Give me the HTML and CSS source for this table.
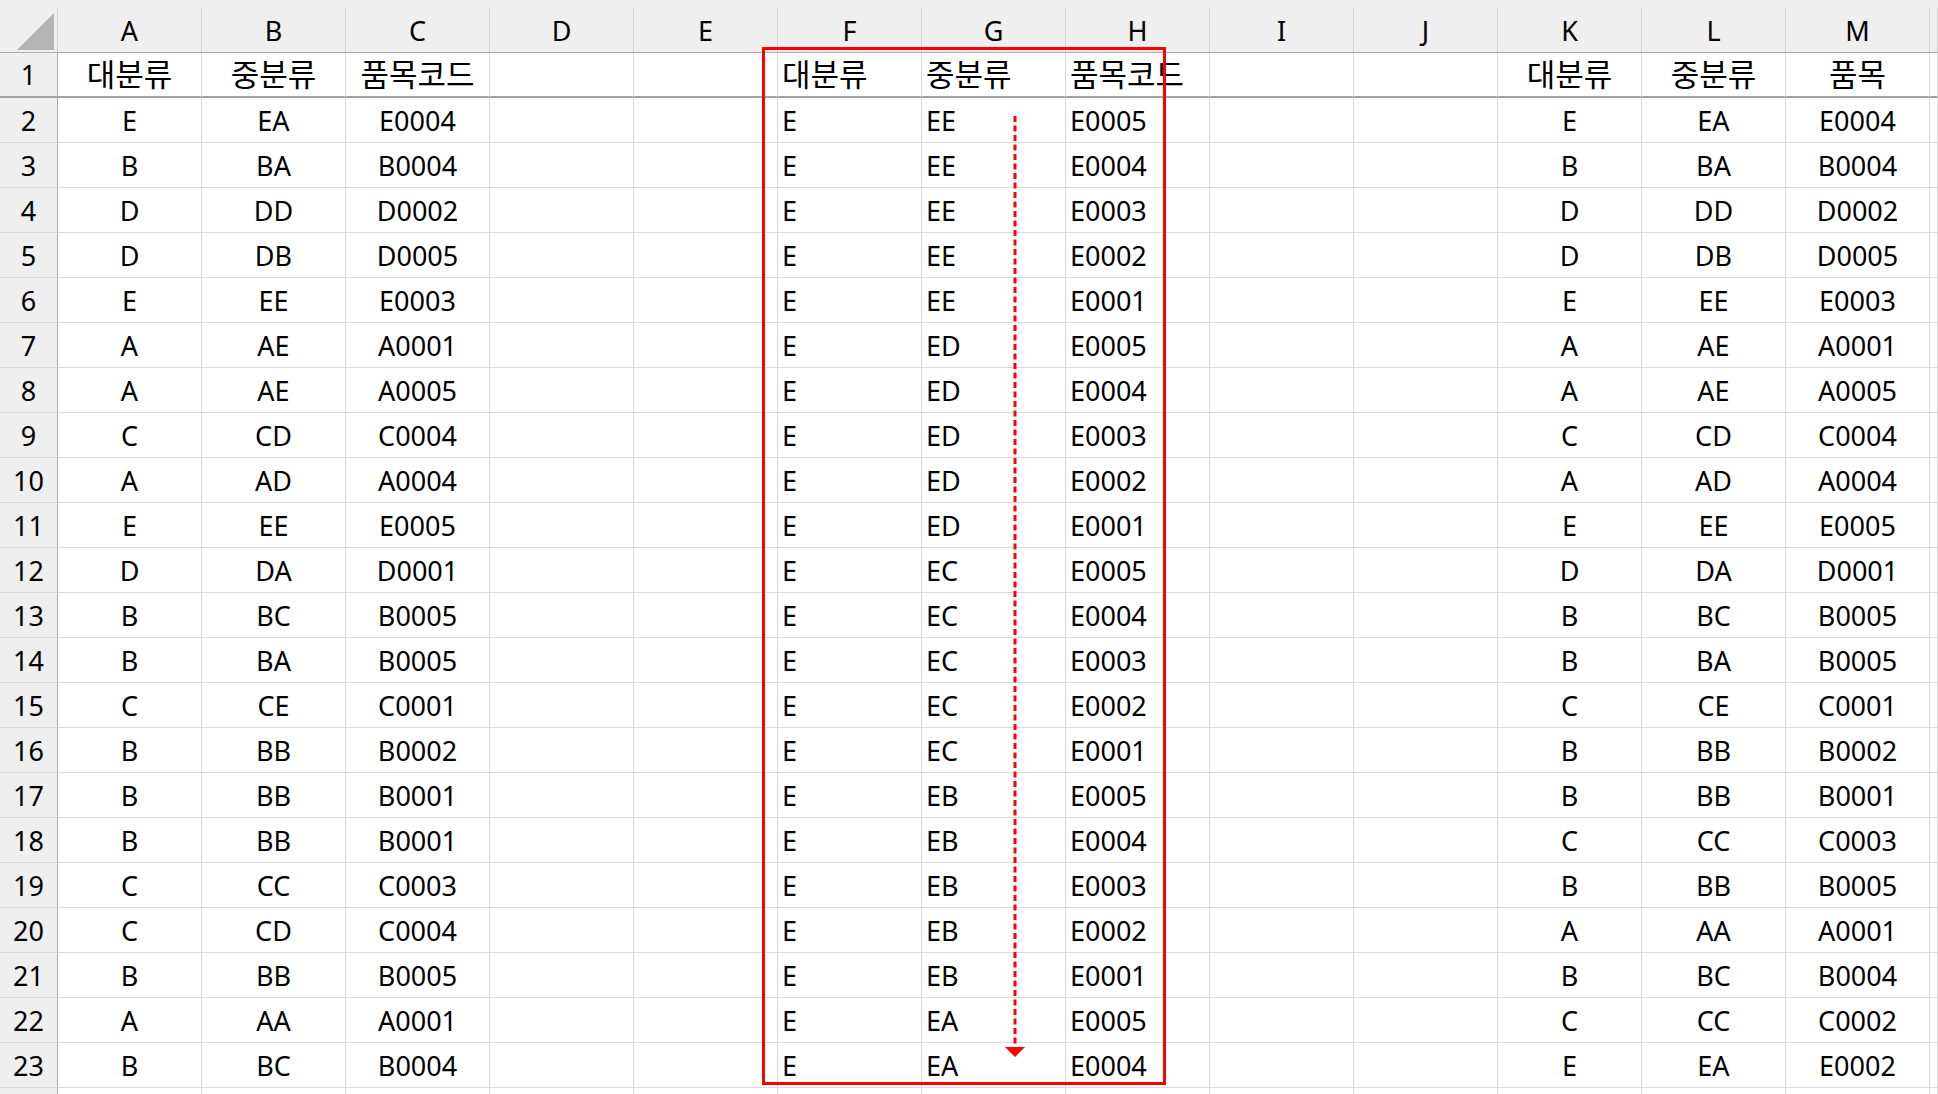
FILE: index.html
```html
<!DOCTYPE html>
<html lang="ko">
<head>
<meta charset="utf-8">
<title>Sheet</title>
<link rel="stylesheet" href="styles.css">
</head>
<body>
<div class="sheet">
  <div class="colhdr">
    <div class="corner"><div class="tri"></div></div>
    <div class="ch">A</div><div class="ch">B</div><div class="ch">C</div><div class="ch">D</div><div class="ch">E</div><div class="ch">F</div><div class="ch">G</div><div class="ch">H</div><div class="ch">I</div><div class="ch">J</div><div class="ch">K</div><div class="ch">L</div><div class="ch">M</div><div class="ch"></div>
  </div>
  <div class="grid">
    <div class="rh r1">1</div><div class="c r1"><span class="ko">대분류</span></div><div class="c r1"><span class="ko">중분류</span></div><div class="c r1"><span class="ko">품목코드</span></div><div class="r1"></div><div class="r1"></div><div class="l r1"><span class="ko">대분류</span></div><div class="l r1"><span class="ko">중분류</span></div><div class="l r1"><span class="ko">품목코드</span></div><div class="r1"></div><div class="r1"></div><div class="c r1"><span class="ko">대분류</span></div><div class="c r1"><span class="ko">중분류</span></div><div class="c r1"><span class="ko">품목</span></div><div class="r1"></div>

    <div class="rh">2</div><div class="c">E</div><div class="c">EA</div><div class="c">E0004</div><div></div><div></div><div class="l">E</div><div class="l">EE</div><div class="l">E0005</div><div></div><div></div><div class="c">E</div><div class="c">EA</div><div class="c">E0004</div><div></div>
    <div class="rh">3</div><div class="c">B</div><div class="c">BA</div><div class="c">B0004</div><div></div><div></div><div class="l">E</div><div class="l">EE</div><div class="l">E0004</div><div></div><div></div><div class="c">B</div><div class="c">BA</div><div class="c">B0004</div><div></div>
    <div class="rh">4</div><div class="c">D</div><div class="c">DD</div><div class="c">D0002</div><div></div><div></div><div class="l">E</div><div class="l">EE</div><div class="l">E0003</div><div></div><div></div><div class="c">D</div><div class="c">DD</div><div class="c">D0002</div><div></div>
    <div class="rh">5</div><div class="c">D</div><div class="c">DB</div><div class="c">D0005</div><div></div><div></div><div class="l">E</div><div class="l">EE</div><div class="l">E0002</div><div></div><div></div><div class="c">D</div><div class="c">DB</div><div class="c">D0005</div><div></div>
    <div class="rh">6</div><div class="c">E</div><div class="c">EE</div><div class="c">E0003</div><div></div><div></div><div class="l">E</div><div class="l">EE</div><div class="l">E0001</div><div></div><div></div><div class="c">E</div><div class="c">EE</div><div class="c">E0003</div><div></div>
    <div class="rh">7</div><div class="c">A</div><div class="c">AE</div><div class="c">A0001</div><div></div><div></div><div class="l">E</div><div class="l">ED</div><div class="l">E0005</div><div></div><div></div><div class="c">A</div><div class="c">AE</div><div class="c">A0001</div><div></div>
    <div class="rh">8</div><div class="c">A</div><div class="c">AE</div><div class="c">A0005</div><div></div><div></div><div class="l">E</div><div class="l">ED</div><div class="l">E0004</div><div></div><div></div><div class="c">A</div><div class="c">AE</div><div class="c">A0005</div><div></div>
    <div class="rh">9</div><div class="c">C</div><div class="c">CD</div><div class="c">C0004</div><div></div><div></div><div class="l">E</div><div class="l">ED</div><div class="l">E0003</div><div></div><div></div><div class="c">C</div><div class="c">CD</div><div class="c">C0004</div><div></div>
    <div class="rh">10</div><div class="c">A</div><div class="c">AD</div><div class="c">A0004</div><div></div><div></div><div class="l">E</div><div class="l">ED</div><div class="l">E0002</div><div></div><div></div><div class="c">A</div><div class="c">AD</div><div class="c">A0004</div><div></div>
    <div class="rh">11</div><div class="c">E</div><div class="c">EE</div><div class="c">E0005</div><div></div><div></div><div class="l">E</div><div class="l">ED</div><div class="l">E0001</div><div></div><div></div><div class="c">E</div><div class="c">EE</div><div class="c">E0005</div><div></div>
    <div class="rh">12</div><div class="c">D</div><div class="c">DA</div><div class="c">D0001</div><div></div><div></div><div class="l">E</div><div class="l">EC</div><div class="l">E0005</div><div></div><div></div><div class="c">D</div><div class="c">DA</div><div class="c">D0001</div><div></div>
    <div class="rh">13</div><div class="c">B</div><div class="c">BC</div><div class="c">B0005</div><div></div><div></div><div class="l">E</div><div class="l">EC</div><div class="l">E0004</div><div></div><div></div><div class="c">B</div><div class="c">BC</div><div class="c">B0005</div><div></div>
    <div class="rh">14</div><div class="c">B</div><div class="c">BA</div><div class="c">B0005</div><div></div><div></div><div class="l">E</div><div class="l">EC</div><div class="l">E0003</div><div></div><div></div><div class="c">B</div><div class="c">BA</div><div class="c">B0005</div><div></div>
    <div class="rh">15</div><div class="c">C</div><div class="c">CE</div><div class="c">C0001</div><div></div><div></div><div class="l">E</div><div class="l">EC</div><div class="l">E0002</div><div></div><div></div><div class="c">C</div><div class="c">CE</div><div class="c">C0001</div><div></div>
    <div class="rh">16</div><div class="c">B</div><div class="c">BB</div><div class="c">B0002</div><div></div><div></div><div class="l">E</div><div class="l">EC</div><div class="l">E0001</div><div></div><div></div><div class="c">B</div><div class="c">BB</div><div class="c">B0002</div><div></div>
    <div class="rh">17</div><div class="c">B</div><div class="c">BB</div><div class="c">B0001</div><div></div><div></div><div class="l">E</div><div class="l">EB</div><div class="l">E0005</div><div></div><div></div><div class="c">B</div><div class="c">BB</div><div class="c">B0001</div><div></div>
    <div class="rh">18</div><div class="c">B</div><div class="c">BB</div><div class="c">B0001</div><div></div><div></div><div class="l">E</div><div class="l">EB</div><div class="l">E0004</div><div></div><div></div><div class="c">C</div><div class="c">CC</div><div class="c">C0003</div><div></div>
    <div class="rh">19</div><div class="c">C</div><div class="c">CC</div><div class="c">C0003</div><div></div><div></div><div class="l">E</div><div class="l">EB</div><div class="l">E0003</div><div></div><div></div><div class="c">B</div><div class="c">BB</div><div class="c">B0005</div><div></div>
    <div class="rh">20</div><div class="c">C</div><div class="c">CD</div><div class="c">C0004</div><div></div><div></div><div class="l">E</div><div class="l">EB</div><div class="l">E0002</div><div></div><div></div><div class="c">A</div><div class="c">AA</div><div class="c">A0001</div><div></div>
    <div class="rh">21</div><div class="c">B</div><div class="c">BB</div><div class="c">B0005</div><div></div><div></div><div class="l">E</div><div class="l">EB</div><div class="l">E0001</div><div></div><div></div><div class="c">B</div><div class="c">BC</div><div class="c">B0004</div><div></div>
    <div class="rh">22</div><div class="c">A</div><div class="c">AA</div><div class="c">A0001</div><div></div><div></div><div class="l">E</div><div class="l">EA</div><div class="l">E0005</div><div></div><div></div><div class="c">C</div><div class="c">CC</div><div class="c">C0002</div><div></div>
    <div class="rh">23</div><div class="c">B</div><div class="c">BC</div><div class="c">B0004</div><div></div><div></div><div class="l">E</div><div class="l">EA</div><div class="l">E0004</div><div></div><div></div><div class="c">E</div><div class="c">EA</div><div class="c">E0002</div><div></div>
    <div class="rh"></div><div></div><div></div><div></div><div></div><div></div><div></div><div></div><div></div><div></div><div></div><div></div><div></div><div></div><div></div>
  </div>
  <div class="selbox"></div>
  <svg class="arrow" width="20" height="950" viewBox="0 0 20 950">
    <line x1="10" y1="6" x2="10" y2="938" stroke="#ff0000" stroke-width="3" stroke-dasharray="6 3.5"/>
    <polygon points="0,937 20,937 10,947" fill="#ff0000"/>
  </svg>
</div>
</body>
</html>
```

FILE: styles.css
```css
html, body {
  margin: 0;
  padding: 0;
  background: #ffffff;
}
body {
  width: 1938px;
  height: 1094px;
  overflow: hidden;
}
.sheet {
  position: relative;
  width: 1938px;
  height: 1094px;
  overflow: hidden;
  font-family: "Noto Sans", "Noto Sans CJK KR", sans-serif;
  font-size: 27px;
  color: #000;
}
.colhdr {
  display: grid;
  grid-template-columns: 58px repeat(13, 144px) 1fr;
  height: 53px;
  box-sizing: border-box;
  padding-top: 8px;
  background: #efefef;
  border-bottom: 1px solid #ababab;
}
.colhdr > div {
  box-sizing: border-box;
  border-right: 1px solid #d2d2d2;
  display: flex;
  align-items: center;
  justify-content: center;
}
.corner {
  align-items: flex-end !important;
  justify-content: flex-end !important;
  padding: 0 3px 2px 0;
}
.tri {
  width: 37px;
  height: 37px;
  background: #b4b4b4;
  clip-path: polygon(100% 0, 100% 100%, 0 100%);
}
.grid {
  display: grid;
  grid-template-columns: 58px repeat(13, 144px) 1fr;
  grid-auto-rows: 45px;
}
.grid > div {
  box-sizing: border-box;
  border-right: 1px solid #dadada;
  border-bottom: 1px solid #dadada;
  display: flex;
  align-items: center;
  white-space: nowrap;
  overflow: visible;
}
.grid > .rh {
  background: #efefef;
  border-right: 1px solid #ababab;
  justify-content: center;
}
.grid > .r1 {
  border-bottom: 2px solid #a3a3a3;
}
.c {
  justify-content: center;
}
.l {
  justify-content: flex-start;
  padding-left: 4px;
}
.ko {
  font-size: 31px;
  line-height: 1;
  font-weight: 400;
}
.selbox {
  position: absolute;
  left: 762px;
  top: 47px;
  width: 404px;
  height: 1038px;
  box-sizing: border-box;
  border: 3px solid #ff0000;
}
.arrow {
  position: absolute;
  left: 1005px;
  top: 110px;
}
```
